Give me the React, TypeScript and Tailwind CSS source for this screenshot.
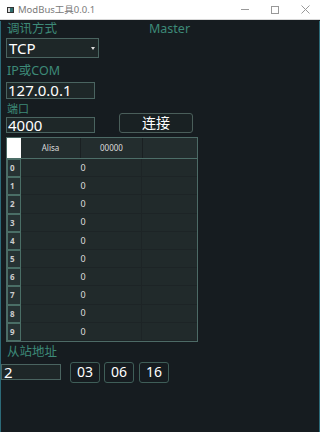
import React from "react";

const F = { fontFamily: '"Noto Sans", "Noto Sans CJK SC", sans-serif' };

export default function App() {
  const rows = [0, 1, 2, 3, 4, 5, 6, 7, 8, 9];
  return (
    <div className="w-[320px] h-[432px] bg-[#161c20] overflow-hidden relative" style={F}>
      {/* title bar */}
      <div className="h-[20px] bg-white flex items-center border-b border-[#d8d8d8]">
        <div className="ml-[7px] w-[7px] h-[6px] border border-[#333] bg-[#2e6f6f] flex">
          <div className="w-[2px] h-full bg-[#ddd]" />
        </div>
        <span className="ml-[4px] text-[9.5px] text-[#7a7a7a] leading-none">ModBus工具0.0.1</span>
        <div className="ml-auto flex items-center h-full">
          <div className="w-[30px] flex justify-center"><div className="w-[8px] h-px bg-[#999]" /></div>
          <div className="w-[30px] flex justify-center"><div className="w-[8px] h-[8px] border border-[#999]" /></div>
          <div className="w-[30px] flex justify-center text-[#999]">
            <svg width="9" height="9" viewBox="0 0 9 9"><path d="M0.5 0.5 L8.5 8.5 M8.5 0.5 L0.5 8.5" stroke="#999" strokeWidth="1" /></svg>
          </div>
        </div>
      </div>
      {/* body */}
      <div className="border-l border-b border-r border-[#2c6a78] h-[412px] pl-[5px]">
        <div className="flex h-[17px] mt-[1px] items-center">
          <span className="w-[143px] text-[12.5px] leading-none text-[#3d8a78] pl-[1px]">调讯方式</span>
          <span className="text-[12.5px] leading-none text-[#3d8a78]">Master</span>
        </div>
        <div className="w-[93px] h-[20px] border border-[#4a6460] bg-[#1e2728] flex items-center">
          <span className="pl-[2px] text-[15px] leading-none text-white">TCP</span>
          <svg className="ml-auto mr-[3px]" width="4" height="3" viewBox="0 0 4 3"><path d="M0 0 L4 0 L2 3 Z" fill="#ddd" /></svg>
        </div>
        <div className="h-[21px] mt-[3px] flex items-center text-[12.5px] leading-none text-[#3d8a78] pl-[1px]">IP或COM</div>
        <div className="w-[89px] h-[17px] border border-[#4a6460] bg-[#1e2728] flex items-center">
          <span className="pl-[1px] text-[15px] leading-none text-white">127.0.0.1</span>
        </div>
        <div className="flex items-end">
          <div className="flex flex-col">
            <div className="h-[18px] flex items-center text-[11px] leading-none text-[#3d8a78] pl-[1px]">端口</div>
            <div className="w-[89px] h-[16px] border border-[#4a6460] bg-[#1e2728] flex items-center">
              <span className="pl-[1px] text-[15px] leading-none text-white">4000</span>
            </div>
          </div>
          <div className="ml-[24px] w-[74px] h-[20px] border border-[#4a5e5a] rounded-[3px] bg-[#192123] flex items-center justify-center text-[14px] leading-none text-white">连接</div>
        </div>
        {/* table */}
        <div className="mt-[4px] w-[192px] h-[205px] border border-[#4d6a66] bg-[#212a2b] flex flex-col">
          <div className="flex h-[21px] border-b border-[#4d6e68] bg-[#232d2e]">
            <div className="w-[14px] bg-white" />
            <div className="w-[60px] flex items-center justify-center text-[8px] text-[#ddd] border-r border-[#1a2022]">Alisa</div>
            <div className="w-[62px] flex items-center justify-center text-[8px] text-[#ddd] border-r border-[#1a2022]">00000</div>
            <div className="flex-1" />
          </div>
          {rows.map((r) => (
            <div key={r} className="flex h-[18.2px]">
              <div className="w-[14px] bg-[#263233] border border-[#4a6e66] flex items-center pl-[2px] text-[8px] font-bold text-[#ccc]">{r}</div>
              <div className="w-[120px] pl-[4px] border-b border-[#1d2426] flex items-center justify-center text-[9px] text-[#ddd]">0</div>
              <div className="flex-1 border-l border-b border-[#1d2426]" />
            </div>
          ))}
        </div>
        <div className="h-[17px] mt-[2px] flex items-center text-[12.5px] leading-none text-[#3d8a78] pl-[1px]">从站地址</div>
        <div className="flex items-center -ml-[5px] h-[22px]">
          <div className="w-[60px] h-[16px] border border-[#4a6460] bg-[#1e2728] flex items-center">
            <span className="pl-[2px] text-[15px] leading-none text-white">2</span>
          </div>
          <div className="ml-[9px] w-[30px] h-[21px] border border-[#3f5e58] rounded-[3px] flex items-center justify-center text-[14px] leading-none text-white">03</div>
          <div className="ml-[4px] w-[30px] h-[21px] border border-[#3f5e58] rounded-[3px] flex items-center justify-center text-[14px] leading-none text-white">06</div>
          <div className="ml-[5px] w-[30px] h-[21px] border border-[#3f5e58] rounded-[3px] flex items-center justify-center text-[14px] leading-none text-white">16</div>
        </div>
      </div>
    </div>
  );
}
